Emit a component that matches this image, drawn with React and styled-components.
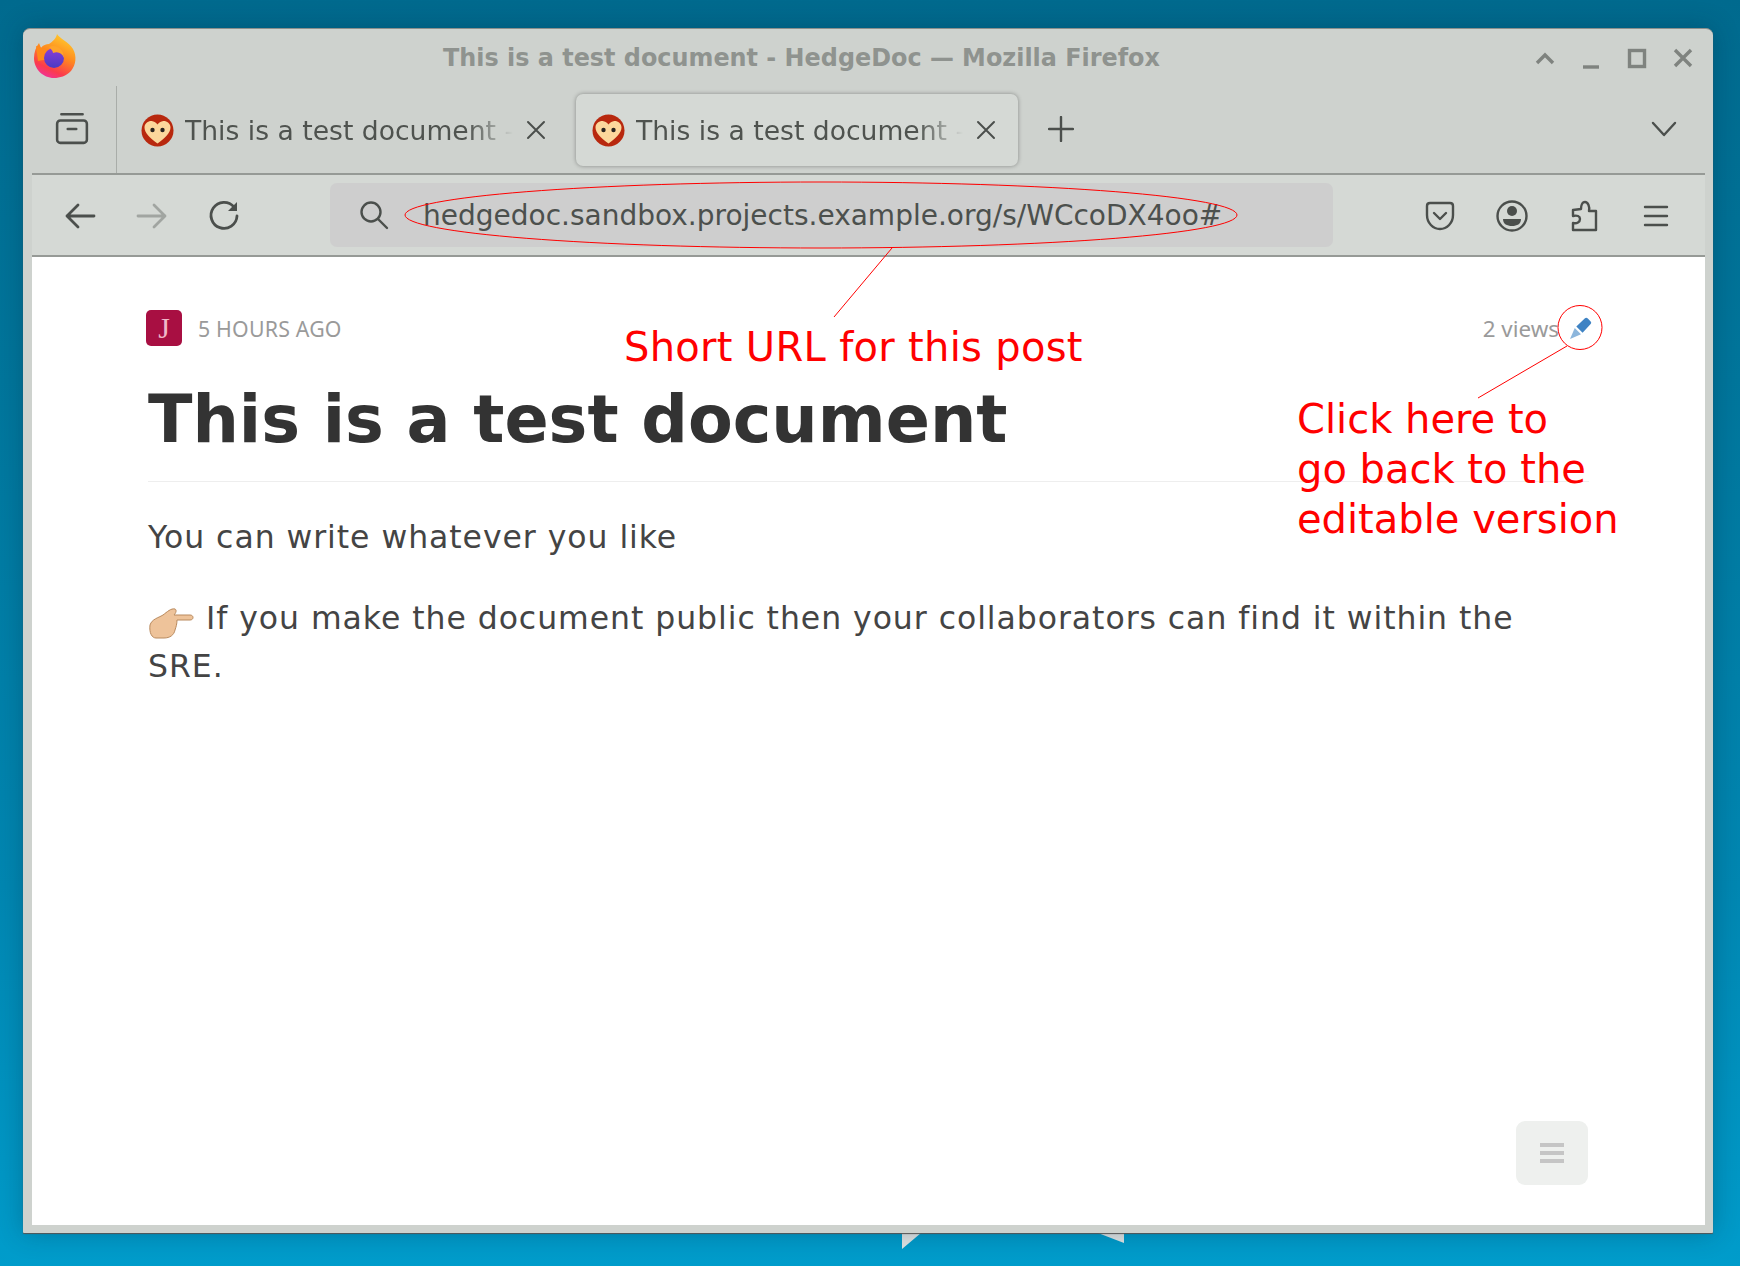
import styled, { createGlobalStyle } from "styled-components";

const GlobalStyle = createGlobalStyle`
  html, body {
    margin: 0;
    padding: 0;
    background: #0088b4;
  }
  * {
    box-sizing: border-box;
  }
`;

const Desktop = styled.div`
  position: relative;
  width: 1740px;
  height: 1266px;
  padding: 28px 27px 33px 23px;
  overflow: hidden;
  background: linear-gradient(180deg, #006a8e 0%, #00769c 30%, #0087b2 70%, #009ccb 100%);
  font-family: "DejaVu Sans", sans-serif;
`;

const WallpaperBit = styled.div`
  position: absolute;
  top: 1233px;
  left: ${({ $left }) => $left}px;
  width: ${({ $w }) => $w}px;
  height: ${({ $h }) => $h}px;
  background: #e2e4e4;
  clip-path: ${({ $flip }) =>
    $flip ? "polygon(0 0, 100% 0, 100% 100%)" : "polygon(0 0, 100% 0, 0 100%)"};
`;

const Window = styled.div`
  position: relative;
  display: flex;
  flex-direction: column;
  height: 100%;
  padding: 0 8px 8px 9px;
  background: #ced2ce;
  border-top: 1px solid #8c8f8c;
  border-radius: 7px 7px 1px 1px;
  box-shadow: 0 1px 1px #555, 0 0 26px rgba(0, 40, 60, 0.3);
`;

const TitleBar = styled.div`
  position: relative;
  flex: 0 0 57px;
  display: flex;
  align-items: center;
  justify-content: center;
  padding: 1px 134px 0 0;
  color: #8f938f;
  font-size: 23.9px;
  font-weight: 700;
  white-space: nowrap;
`;

const Logo = styled.svg`
  position: absolute;
  left: 1px;
  top: 5px;
  width: 44px;
  height: 44px;
`;

const WindowButtons = styled.div`
  position: absolute;
  right: 10px;
  top: 17px;
  display: flex;
  gap: 22px;
`;

const WinIcon = styled.svg`
  width: 24px;
  height: 24px;
  fill: none;
  stroke: #7f837f;
  stroke-width: 3.4;
`;

const TabBar = styled.div`
  flex: 0 0 89px;
  display: flex;
  align-items: stretch;
  border-bottom: 2px solid #969a96;
`;

const SidebarSlot = styled.div`
  flex: 0 0 85px;
  display: flex;
  align-items: center;
  justify-content: center;
  border-right: 1px solid #a9ada9;
  padding: 0 5px 4px 0;
`;

const ChromeIcon = styled.svg`
  width: ${({ $size }) => $size || 32}px;
  height: ${({ $size }) => $size || 32}px;
  fill: none;
  stroke: ${({ $dim }) => ($dim ? "#a1a5a1" : "#4b4f4c")};
  stroke-width: 2.4;
  stroke-linecap: round;
  stroke-linejoin: round;
  flex: none;
`;

const Tab = styled.div`
  flex: 0 0 ${({ $width }) => $width}px;
  min-width: 0;
  display: flex;
  align-items: center;
  gap: 11px;
  height: 72px;
  margin: 8px 0 0 ${({ $gap }) => $gap}px;
  padding: ${({ $active }) => ($active ? "0 22px 0 16px" : "0 3px 0 24px")};
  border-radius: 7px;
  background: ${({ $active }) => ($active ? "#d5d9d5" : "transparent")};
  box-shadow: ${({ $active }) =>
    $active ? "0 0 4px rgba(0, 0, 0, 0.35)" : "none"};
`;

const TabLabel = styled.span`
  flex: 1;
  min-width: 0;
  white-space: nowrap;
  color: #4f534f;
  font-size: 26.6px;
  mask-image: linear-gradient(90deg, #000 86%, transparent 100%);
`;

const CloseIcon = styled(ChromeIcon)`
  margin-left: 2px;
  stroke-width: 2;
`;

const NewTab = styled.div`
  margin: 13px 0 0 30px;
  display: flex;
  align-items: center;
  height: 60px;
`;

const TabListChevron = styled.div`
  margin: 0 28px 2px auto;
  display: flex;
  align-items: center;
`;

const NavBar = styled.div`
  flex: 0 0 82px;
  display: flex;
  align-items: center;
  padding: 0 0 0 32px;
  background: #d5d9d5;
  border-bottom: 2px solid #969a96;
`;

const NavButtons = styled.div`
  display: flex;
  gap: 40px;
  width: 266px;
  margin-top: 1px;
`;

const UrlBar = styled.div`
  flex: 0 0 1003px;
  height: 64px;
  display: flex;
  align-items: center;
  gap: 34px;
  padding-left: 29px;
  border-radius: 7px;
  background: #cecece;
  color: #4c504d;
  font-size: 28px;
  white-space: nowrap;
`;

const NavActions = styled.div`
  display: flex;
  gap: 40px;
  margin: 1px 0 0 91px;
`;

const Page = styled.main`
  position: relative;
  flex: 1;
  padding: 53px 116px 0 116px;
  background: #fff;
`;

const MetaRow = styled.div`
  display: flex;
  align-items: center;
  height: 36px;
  margin-right: -3px;
`;

const Avatar = styled.div`
  width: 36px;
  height: 36px;
  margin-left: -2px;
  margin-right: 16px;
  display: flex;
  align-items: center;
  justify-content: center;
  border-radius: 5px;
  background: #a80f42;
  color: #f0b8c8;
  font-family: "Liberation Serif", serif;
  font-size: 30px;
`;

const MetaText = styled.span`
  color: #9a9a9a;
  font-family: "Noto Sans", sans-serif;
  font-size: 21.3px;
  letter-spacing: 0.2px;
`;

const Views = styled(MetaText)`
  margin-left: auto;
  font-size: 22.4px;
  letter-spacing: 0;
`;

const PencilIcon = styled.svg`
  width: 23px;
  height: 23px;
  margin: 1px 0 0 10px;
  fill: #3f83c4;
`;

const Heading = styled.h1`
  margin: 34px 0 0;
  padding-bottom: 23px;
  border-bottom: 1px solid #eeeeee;
  color: #333;
  font-size: 65.2px;
  line-height: 78px;
  font-weight: 700;
`;

const Paragraph = styled.p`
  margin: ${({ $gap }) => $gap}px 0 0;
  color: #444;
  font-size: 31.5px;
  line-height: 48px;
  letter-spacing: 0.95px;
`;

const HandIcon = styled.svg`
  display: inline-block;
  width: 46px;
  height: 36px;
  margin: 0 12px 0 0;
  vertical-align: -12px;
`;

const FloatingMenu = styled.div`
  position: absolute;
  right: 117px;
  bottom: 40px;
  width: 72px;
  height: 64px;
  display: flex;
  flex-direction: column;
  align-items: center;
  justify-content: center;
  gap: 4px;
  border-radius: 9px;
  background: #eef0ee;
`;

const MenuLine = styled.span`
  width: 24px;
  height: 4px;
  background: #c5c5c5;
`;

const Markup = styled.svg`
  position: absolute;
  left: 0;
  top: 0;
  width: 1740px;
  height: 1266px;
  fill: none;
  stroke: #f00;
  stroke-width: 1;
  pointer-events: none;
`;

const Note = styled.div`
  position: absolute;
  left: ${({ $left }) => $left}px;
  top: ${({ $top }) => $top}px;
  color: #f00;
  font-size: 40px;
  line-height: 50px;
  letter-spacing: ${({ $spacing }) => $spacing || 0}px;
  white-space: nowrap;
`;

const Favicon = () => (
  <svg width="33" height="33" viewBox="0 0 33 33" style={{ flex: "none" }}>
    <circle cx="16.5" cy="16.5" r="16" fill="#b8280e" />
    <path
      d="M16.5 29.5 C9 24 3.5 19 3.5 13.5 C3.5 9 8 6.5 11.5 7.2 C13.8 7.7 15.5 9 16.5 10.5 C17.5 9 19.2 7.7 21.5 7.2 C25 6.5 29.5 9 29.5 13.5 C29.5 19 24 24 16.5 29.5 Z"
      fill="#fcd79c"
    />
    <circle cx="11.5" cy="16" r="2.2" fill="#2a2420" />
    <circle cx="21.5" cy="16" r="2.2" fill="#2a2420" />
  </svg>
);

const FirefoxLogo = () => (
  <Logo viewBox="0 0 44 44">
    <defs>
      <linearGradient id="ffOuter" x1="0.75" y1="0" x2="0.3" y2="1">
        <stop offset="0" stopColor="#ffcf2e" />
        <stop offset="0.45" stopColor="#ff8a1f" />
        <stop offset="0.8" stopColor="#fb3b4c" />
        <stop offset="1" stopColor="#f0329a" />
      </linearGradient>
      <linearGradient id="ffInner" x1="0.5" y1="0" x2="0.5" y2="1">
        <stop offset="0" stopColor="#8a3fd6" />
        <stop offset="1" stopColor="#4a3ac4" />
      </linearGradient>
    </defs>
    <path
      d="M24 0 C26 4 36 8 40 15 C44 22 43 31 38 37 C33 42 27 44 21 44 C10 44 1 35 1 24 C1 18 3 13 6 9 L8 14 C10 11 13 10 16 10 C20 7 23 5 24 0 Z"
      fill="url(#ffOuter)"
    />
    <path d="M3 12 L16 16 L11 21 L16 25 L5 27 Z" fill="#ff8a1a" />
    <circle cx="21" cy="24" r="10" fill="url(#ffInner)" />
    <path d="M16 13 C22 10 31 14 31 24 C29 19 25 17 20 19 C20 17 18 15 16 13 Z" fill="#ffa42a" />
  </Logo>
);

export default function App() {
  return (
    <Desktop>
      <GlobalStyle />
      <WallpaperBit $left={902} $w={19} $h={16} />
      <WallpaperBit $left={1098} $w={26} $h={10} $flip />
      <Window>
        <TitleBar>
          <FirefoxLogo />
          This is a test document - HedgeDoc — Mozilla Firefox
          <WindowButtons>
            <WinIcon viewBox="0 0 24 24">
              <path d="M4 17 L12 9 L20 17" />
            </WinIcon>
            <WinIcon viewBox="0 0 24 24">
              <path d="M4 21 H20" />
            </WinIcon>
            <WinIcon viewBox="0 0 24 24">
              <rect x="4.5" y="4.5" width="15" height="16" />
            </WinIcon>
            <WinIcon viewBox="0 0 24 24">
              <path d="M4 4 L20 20 M20 4 L4 20" />
            </WinIcon>
          </WindowButtons>
        </TitleBar>

        <TabBar>
          <SidebarSlot>
            <ChromeIcon viewBox="0 0 32 32" $size={34}>
              <rect x="2" y="9" width="28" height="21" rx="3" />
              <path d="M6 3 H26 M12 17 H20" />
            </ChromeIcon>
          </SidebarSlot>
          <Tab $width={432} $gap={0}>
            <Favicon />
            <TabLabel>This is a test document -</TabLabel>
            <CloseIcon viewBox="0 0 20 20" $size={20}>
              <path d="M2 2 L18 18 M18 2 L2 18" />
            </CloseIcon>
          </Tab>
          <Tab $width={442} $gap={27} $active>
            <Favicon />
            <TabLabel>This is a test document -</TabLabel>
            <CloseIcon viewBox="0 0 20 20" $size={20}>
              <path d="M2 2 L18 18 M18 2 L2 18" />
            </CloseIcon>
          </Tab>
          <NewTab>
            <ChromeIcon viewBox="0 0 26 26" $size={26}>
              <path d="M13 1 V25 M1 13 H25" />
            </ChromeIcon>
          </NewTab>
          <TabListChevron>
            <ChromeIcon viewBox="0 0 26 26" $size={26}>
              <path d="M2 7 L13 19 L24 7" />
            </ChromeIcon>
          </TabListChevron>
        </TabBar>

        <NavBar>
          <NavButtons>
            <ChromeIcon viewBox="0 0 32 32">
              <path d="M30 16 H3 M14 5 L3 16 L14 27" strokeWidth="2.8" />
            </ChromeIcon>
            <ChromeIcon viewBox="0 0 32 32" $dim>
              <path d="M2 16 H29 M18 5 L29 16 L18 27" strokeWidth="2.8" />
            </ChromeIcon>
            <ChromeIcon viewBox="0 0 32 32">
              <path d="M26 7 A13 13 0 1 0 29 16" strokeWidth="2.8" />
              <path d="M20 11 L29 11 L29 2 Z" fill="#4b4f4c" stroke="none" />
            </ChromeIcon>
          </NavButtons>
          <UrlBar>
            <ChromeIcon viewBox="0 0 30 30" $size={30}>
              <circle cx="12" cy="12" r="9.5" />
              <path d="M19 19 L28 28" />
            </ChromeIcon>
            hedgedoc.sandbox.projects.example.org/s/WCcoDX4oo#
          </UrlBar>
          <NavActions>
            <ChromeIcon viewBox="0 0 32 32">
              <path d="M3 6 C3 4 4 3 6 3 H26 C28 3 29 4 29 6 V15 C29 23 23 29 16 29 C9 29 3 23 3 15 Z" />
              <path d="M10 13 L16 19 L22 13" />
            </ChromeIcon>
            <ChromeIcon viewBox="0 0 32 32">
              <circle cx="16" cy="16" r="14.5" />
              <circle cx="16" cy="11" r="5" fill="#4b4f4c" stroke="none" />
              <path d="M7 19 H25 C25 24 21 26 16 26 C11 26 7 24 7 19 Z" fill="#4b4f4c" stroke="none" />
            </ChromeIcon>
            <ChromeIcon viewBox="0 0 32 32">
              <path d="M5 30 H28 V11 H21 C22 7 20 2 17 2 C14 2 13 6 13 9 L5 10 V16 C9 15 12 16 12 19 C12 22 9 24 5 23 Z" />
            </ChromeIcon>
            <ChromeIcon viewBox="0 0 32 32">
              <path d="M5 7 H27 M5 16 H27 M5 25 H27" />
            </ChromeIcon>
          </NavActions>
        </NavBar>

        <Page>
          <MetaRow>
            <Avatar>J</Avatar>
            <MetaText>5 HOURS AGO</MetaText>
            <Views>2 views</Views>
            <PencilIcon viewBox="0 0 22 22">
              <path d="M7 9 L15 1.5 C16 0.5 17 0.5 18 1.5 L20.5 4 C21.5 5 21.5 6 20.5 7 L13 15 Z" />
              <path d="M5.5 10.5 L11.5 16.5 L1 21 Z" fill="#8db6dc" />
            </PencilIcon>
          </MetaRow>
          <Heading>This is a test document</Heading>
          <Paragraph $gap={31}>You can write whatever you like</Paragraph>
          <Paragraph $gap={33}>
            <HandIcon viewBox="0 0 46 36">
              <path
                d="M2 20 C4 14 10 13 15 10 C19 7 23 3 27 4 C29 5 28 8 26 10 L42 10 C46 10 46 15 42 15 L29 15 C29 19 28 22 27 25 C26 30 22 33 16 33 L8 33 C4 33 1 28 2 20 Z"
                fill="#eec39a"
                stroke="#b98a5e"
                strokeWidth="1"
              />
            </HandIcon>
            If you make the document public then your collaborators can find it
            within the SRE.
          </Paragraph>
          <FloatingMenu>
            <MenuLine />
            <MenuLine />
            <MenuLine />
          </FloatingMenu>
        </Page>
      </Window>

      <Note $left={624} $top={322} $spacing={0.3}>Short URL for this post</Note>
      <Note $left={1297} $top={394}>
        Click here to
        <br />
        go back to the
        <br />
        editable version
      </Note>
      <Markup viewBox="0 0 1740 1266">
        <ellipse cx="821" cy="215" rx="416" ry="33" />
        <path d="M892 248 L834 317" />
        <circle cx="1580" cy="327.5" r="22" />
        <path d="M1567 346 L1478 398" />
      </Markup>
    </Desktop>
  );
}
